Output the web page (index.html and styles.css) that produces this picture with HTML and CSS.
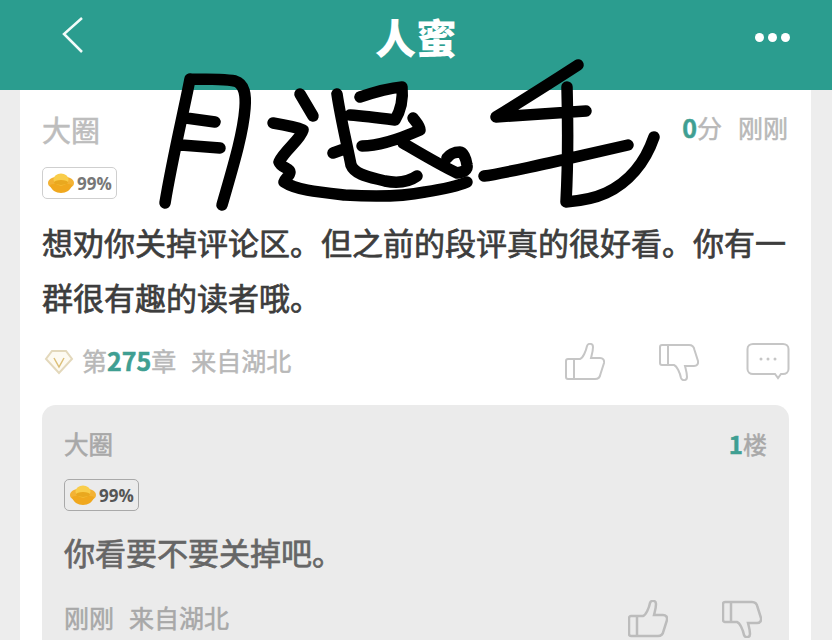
FILE: index.html
```html
<!DOCTYPE html>
<html lang="zh-CN">
<head>
    <meta charset="UTF-8">
    <meta name="viewport" content="width=device-width, initial-scale=1.0">
    <title>人蜜</title>
    <link rel="stylesheet" href="styles.css">
</head>
<body>
<svg class="defs" width="0" height="0">
    <symbol id="thumb" viewBox="0 0 40 38">
        <path d="M3 16H15C18 15 21 8 22 3C23 0 28 0 28 4C28 8 27 11 26 15H35C38 15 39.5 17 39 20L35.5 31C35 34 33 36 30 36H3C1.5 36 1 35 1 34V18C1 17 2 16 3 16ZM9 16V36"/>
    </symbol>
    <symbol id="ingot" viewBox="0 0 26 20">
        <ellipse cx="13" cy="10" rx="13" ry="7" fill="#f3b234"/>
        <path d="M2 12C6 10 20 10 24 12C23 17 18 20 13 20C8 20 3 17 2 12Z" fill="#f0a81e"/>
        <ellipse cx="13" cy="6.5" rx="7.5" ry="6" fill="#f9cd4a"/>
        <ellipse cx="13" cy="9.5" rx="7" ry="2.4" fill="#e9a81f"/>
    </symbol>
</svg>

<header class="topbar">
    <svg class="back" width="24" height="40" viewBox="0 0 24 40"><path d="M21 2L3 18L21 36"/></svg>
    <h1>人蜜</h1>
    <div class="more"><i></i><i></i><i></i></div>
</header>

<main class="card">
    <div class="name-row">
        <span class="name">大圈</span>
        <span class="score"><b>0</b>分<span class="time">刚刚</span></span>
    </div>
    <div class="badge"><svg width="26" height="20"><use href="#ingot"/></svg>99%</div>
    <p class="comment">想劝你关掉评论区。但之前的段评真的很好看。你有一群很有趣的读者哦。</p>
    <div class="meta-row">
        <div class="meta">
            <svg class="vip" width="30" height="26" viewBox="0 0 30 26">
                <path class="vip-edge" d="M8 2H22L28 10L15 24L2 10Z"/>
                <path class="vip-v" d="M10 9L15 18L20 9"/>
            </svg>
            <span class="chapter">第<b>275</b>章</span>
            <span>来自湖北</span>
        </div>
        <div class="actions">
            <svg class="icon" width="40" height="38"><use href="#thumb"/></svg>
            <svg class="icon flip" width="40" height="38"><use href="#thumb"/></svg>
            <svg class="icon" width="44" height="38" viewBox="0 0 44 38">
                <path d="M7 1H37C40 1 42.500 3 42.500 6V26C42.500 29 40 31 37 31H35L32 35L29 31H7C4 31 1.500 29 1.500 26V6C1.500 3 4 1 7 1Z"/>
                <circle class="dot" cx="15" cy="16" r="1.500"/>
                <circle class="dot" cx="22" cy="16" r="1.500"/>
                <circle class="dot" cx="29" cy="16" r="1.500"/>
            </svg>
        </div>
    </div>

    <section class="reply">
        <div class="name-row reply-head">
            <span class="name">大圈</span>
            <span class="floor"><b>1</b>楼</span>
        </div>
        <div class="badge badge-reply"><svg width="26" height="20"><use href="#ingot"/></svg>99%</div>
        <p class="reply-text">你看要不要关掉吧。</p>
        <div class="meta-row reply-meta">
            <div class="meta">
                <span>刚刚</span>
                <span>来自湖北</span>
            </div>
            <div class="actions reply-actions">
                <svg class="icon" width="40" height="38"><use href="#thumb"/></svg>
                <svg class="icon flip" width="40" height="38"><use href="#thumb"/></svg>
            </div>
        </div>
    </section>
</main>

<!-- handwritten scribble drawn over the screenshot -->
<svg class="scribble" width="832" height="240" viewBox="0 0 832 240">
    <path d="M190 79C184 110 172 160 165 203M190 79C205 79 225 79 235 81C245 84 246 95 245 108C243 135 232 170 222 205M186 118L215 122M181 145L220 148"/>
    <path d="M300 94L313 116M273 123C285 125 296 127 303 130C300 140 285 150 279 162C281 168 290 168 290 172C290 176 285 178 284 182C296 190 317 192 345 195C375 197 405 196 425 192C445 189 458 186 467 182"/>
    <path d="M337 94C340 115 346 140 351 165C355 175 370 177 385 181C400 184 410 181 417 176M360 97C375 92 390 88 402 87C403 97 401 110 395 120C380 118 365 116 350 115M333 153L347 148M362 146C375 146 395 141 420 130C420 126 416 122 413 118M403 143C420 153 440 165 457 173C464 172 468 170 467 165C466 158 463 152 460 152C454 152 449 155 447 158"/>
    <path d="M578 65C555 80 520 102 496 117L586 111M567 87C568 125 568 165 566 202C580 201 595 198 606 193C628 183 645 163 654 137M484 176C500 174 525 168 549 163L628 145"/>
</svg>
</body>
</html>
```

FILE: styles.css
```css
* {
    box-sizing: border-box;
}

body {
    margin: 0;
    height: 640px;
    overflow: hidden;
    position: relative;
    background: #ededed;
    font-family: "Noto Sans CJK SC", "Noto Sans", sans-serif;
}

p {
    margin: 0;
}

.defs {
    display: block;
    height: 0;
}

.topbar {
    height: 90px;
    background: #2b9d8f;
    display: grid;
    grid-template-columns: 1fr auto 1fr;
    align-items: center;
    padding: 0 42px 18px;
}

.back {
    margin-left: 19px;
    fill: none;
    stroke: #f2fbf9;
    stroke-width: 2.500;
}

.topbar h1 {
    margin: 0;
    font-size: 41px;
    line-height: 50px;
    font-weight: 900;
    color: #fff;
}

.more {
    display: flex;
    gap: 4px;
    justify-self: end;
    margin-top: 2px;
}

.more i {
    width: 9px;
    height: 9px;
    border-radius: 50%;
    background: #fff;
}

.card {
    margin: 0 21px 0 20px;
    padding: 21px 22px 0;
    background: #fff;
}

.name-row {
    display: flex;
    justify-content: space-between;
    align-items: flex-start;
}

.name {
    font-size: 29px;
    line-height: 36px;
    -webkit-text-stroke: 0.6px;
    color: #bdbdbd;
}

.score {
    margin: 1px 1px 0 0;
    font-size: 25px;
    line-height: 30px;
    color: #b8b8b8;
    -webkit-text-stroke: 0.5px;
}

.score b {
    color: #3f9f92;
    font-weight: 700;
}

.time {
    margin-left: 16px;
}

.badge {
    margin-top: 20px;
    width: 75px;
    height: 32px;
    display: flex;
    align-items: center;
    gap: 3px;
    padding-left: 5px;
    border: 1px solid #cfcfcf;
    border-radius: 5px;
    font-family: "Open Sans", sans-serif;
    font-size: 17px;
    font-weight: 700;
    color: #777;
}

.comment {
    margin-top: 15px;
    font-size: 31px;
    line-height: 55px;
    -webkit-text-stroke: 0.7px;
    color: #3d3d3d;
}

.meta-row {
    margin-top: 19px;
    height: 38px;
    display: flex;
    justify-content: space-between;
    align-items: center;
}

.meta {
    display: flex;
    align-items: center;
    gap: 15px;
    font-size: 25px;
    -webkit-text-stroke: 0.5px;
    color: #b8b8b8;
}

.meta span {
    padding-bottom: 4px;
}

.vip {
    margin-left: 2px;
    margin-right: -7px;
}

.vip-edge {
    fill: #fdfaf1;
    stroke: #e3d8bb;
    stroke-width: 2;
}

.vip-v {
    fill: none;
    stroke: #dcbf78;
    stroke-width: 1.500;
}

.chapter b {
    color: #3f9f92;
    font-weight: 700;
}

.actions {
    display: flex;
    gap: 54px;
    margin-right: -1px;
    align-items: flex-start;
}

.actions .icon:last-child {
    margin-left: -7px;
}

.icon {
    fill: none;
    stroke: #c6c6c6;
    stroke-width: 2;
}

.icon .dot {
    fill: #c6c6c6;
    stroke: none;
}

.flip {
    transform: scaleY(-1);
}

.reply {
    margin-top: 24px;
    height: 260px;
    padding: 22px 22px 0;
    background: #ebebeb;
    border-radius: 14px 14px 0 0;
}

.reply-head .name {
    font-size: 24.500px;
    line-height: 34px;
    color: #a8a8a8;
}

.floor {
    font-size: 24px;
    line-height: 34px;
    -webkit-text-stroke: 0.5px;
    color: #a8a8a8;
}

.floor b {
    color: #3f9f92;
    font-weight: 700;
}

.badge-reply {
    margin-top: 18px;
    border-color: #a9a9a9;
    color: #555;
}

.reply-text {
    margin-top: 16px;
    font-size: 31px;
    line-height: 50px;
    -webkit-text-stroke: 0.7px;
    color: #666;
}

.reply-meta {
    margin-top: 23px;
}

.reply-meta .meta {
    color: #a8a8a8;
}

.reply-actions {
    margin-right: 5px;
}

.reply-actions .icon {
    stroke: #bcbcbc;
    stroke-width: 2.500;
}

.reply-actions .icon:last-child {
    margin-left: 0;
}

.scribble {
    position: absolute;
    left: 0;
    top: 0;
    fill: none;
    stroke: #000;
    stroke-width: 11.500;
    stroke-linecap: round;
    stroke-linejoin: round;
}
```
